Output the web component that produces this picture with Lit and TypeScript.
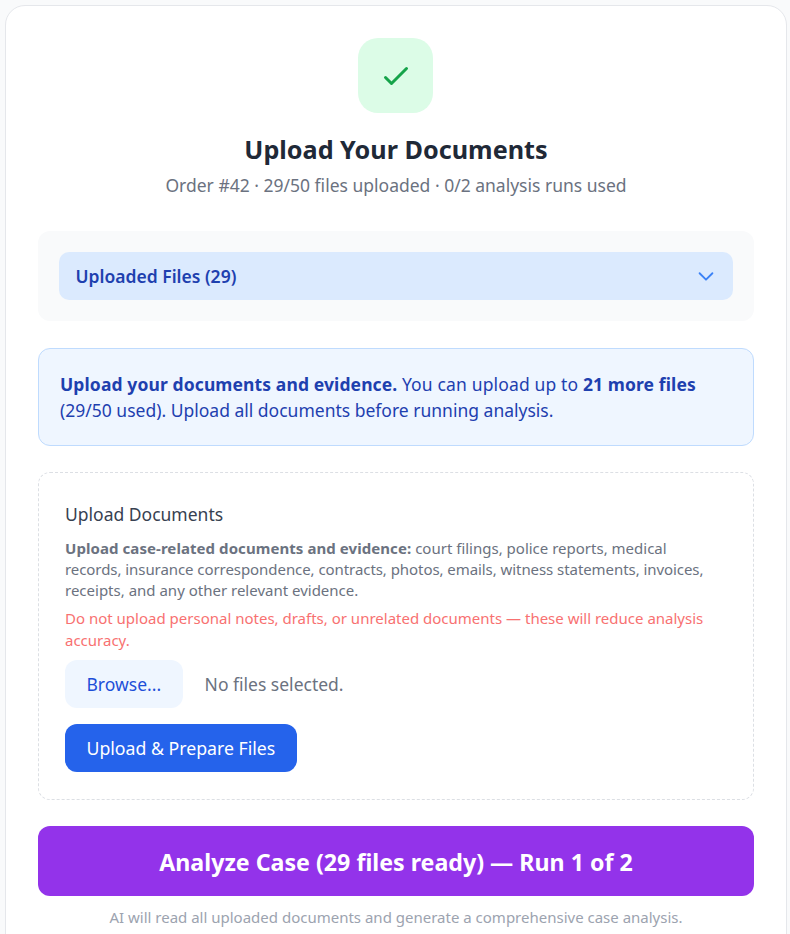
import { css, html, LitElement } from "lit";
import { customElement } from "lit/decorators.js";

@customElement("app-root")
export class AppRootElement extends LitElement {
  static styles = css`
    :host {
      display: block;
      height: 934px;
      overflow: hidden;
      background: #f9fafb;
      font-family: "Noto Sans", "Open Sans", sans-serif;
      color: #1f2937;
    }
    .card {
      box-sizing: border-box;
      margin: 5px 3px 0 5px;
      padding: 32px;
      background: #fff;
      border: 1px solid #e5e7eb;
      border-radius: 20px;
      display: flex;
      flex-direction: column;
    }
    .header {
      display: flex;
      flex-direction: column;
      align-items: center;
      margin-bottom: 32px;
    }
    .badge {
      width: 75px;
      height: 75px;
      border-radius: 20px;
      background: #dcfce7;
      display: flex;
      align-items: center;
      justify-content: center;
      margin: 0 1px 16px 0;
    }
    .badge svg {
      width: 36px;
      height: 36px;
      color: #16a34a;
    }
    h1 {
      margin: 0 0 2px;
      font-size: 25.2px;
      line-height: 40px;
      font-weight: 700;
      color: #1f2937;
    }
    .sub {
      margin: 0;
      font-size: 17.5px;
      line-height: 28px;
      color: #6b7280;
    }
    .files {
      background: #f9fafb;
      border-radius: 12px;
      padding: 21px;
      margin-bottom: 27px;
    }
    .files-toggle {
      display: flex;
      align-items: center;
      justify-content: space-between;
      height: 48px;
      padding: 0 16px 0 16.5px;
      border-radius: 10px;
      background: #dbeafe;
      color: #1e40af;
      font-size: 17.5px;
      font-weight: 600;
    }
    .files-toggle svg {
      width: 22px;
      height: 22px;
      color: #3b82f6;
    }
    .notice {
      background: #eff6ff;
      border: 1px solid #bfdbfe;
      border-radius: 12px;
      padding: 22px 21px;
      margin-bottom: 26px;
      color: #1e40af;
      font-size: 17.5px;
      line-height: 26px;
    }
    .notice b {
      font-weight: 700;
      letter-spacing: 0.11px;
    }
    .lead {
      letter-spacing: 0.15px;
    }
    .upload {
      border: 1px dashed #dcdfe4;
      border-radius: 12px;
      padding: 27px 26px;
      margin-bottom: 26px;
    }
    .upload h2 {
      margin: 0 0 10px;
      font-size: 17.5px;
      line-height: 28px;
      font-weight: 400;
      color: #374151;
    }
    .desc {
      margin: 0 0 6px;
      padding-right: 10px;
      font-size: 15px;
      line-height: 21px;
      color: #6b7280;
    }
    .desc b {
      letter-spacing: 0.07px;
    }
    .tight {
      letter-spacing: -0.066px;
    }
    .warn {
      margin: 0 0 9px;
      font-size: 15px;
      line-height: 22px;
      color: #f87171;
    }
    .picker {
      display: flex;
      align-items: center;
      gap: 22px;
      margin-bottom: 16px;
    }
    .browse {
      display: flex;
      align-items: center;
      height: 48px;
      padding: 0 21.5px;
      border-radius: 12px;
      background: #eff6ff;
      color: #1d4ed8;
      font-size: 17.5px;
    }
    .picked {
      font-size: 17.5px;
      color: #6b7280;
    }
    .primary {
      display: inline-flex;
      align-items: center;
      height: 48px;
      padding: 0 21.5px;
      border-radius: 12px;
      background: #2563eb;
      color: #fff;
      font-size: 17.7px;
    }
    .analyze {
      box-sizing: border-box;
      display: flex;
      align-items: center;
      justify-content: center;
      height: 70px;
      padding-top: 2px;
      border-radius: 12px;
      background: #9333ea;
      color: #fff;
      font-size: 23.2px;
      font-weight: 700;
      margin-bottom: 11px;
    }
    .note {
      margin: 0;
      text-align: center;
      font-size: 15px;
      line-height: 21px;
      color: #9ca3af;
    }
  `;

  render() {
    return html`<div class="card">
      <div class="header">
        <div class="badge">
          <svg viewBox="0 0 24 24" fill="none" stroke="currentColor" stroke-width="2" stroke-linecap="round" stroke-linejoin="round">
            <path d="M5 13l4 4L19 7"></path>
          </svg>
        </div>
        <h1>Upload Your Documents</h1>
        <p class="sub">Order #42 · 29/50 files uploaded · 0/2 analysis runs used</p>
      </div>

      <div class="files">
        <div class="files-toggle">
          <span>Uploaded Files (29)</span>
          <svg viewBox="0 0 24 24" fill="none" stroke="currentColor" stroke-width="2" stroke-linecap="round" stroke-linejoin="round">
            <path d="M19 9l-7 7-7-7"></path>
          </svg>
        </div>
      </div>

      <div class="notice">
        <b>Upload your documents and evidence.</b> <span class="lead">You can upload up to</span>
        <b>21 more files</b> (29/50 used). Upload all documents before running analysis.
      </div>

      <div class="upload">
        <h2>Upload Documents</h2>
        <p class="desc">
          <b>Upload case-related documents and evidence:</b> court filings, police reports, medical
          <span class="tight">records, insurance correspondence, contracts, photos, emails, witness statements, invoices,</span>
          receipts, and any other relevant evidence.
        </p>
        <p class="warn">
          Do not upload personal notes, drafts, or unrelated documents — these will reduce analysis
          accuracy.
        </p>
        <div class="picker">
          <span class="browse">Browse...</span>
          <span class="picked">No files selected.</span>
        </div>
        <span class="primary">Upload &amp; Prepare Files</span>
      </div>

      <div class="analyze">Analyze Case (29 files ready) — Run 1 of 2</div>
      <p class="note">AI will read all uploaded documents and generate a comprehensive case analysis.</p>
    </div>`;
  }
}

declare global {
  interface HTMLElementTagNameMap {
    "app-root": AppRootElement;
  }
}
